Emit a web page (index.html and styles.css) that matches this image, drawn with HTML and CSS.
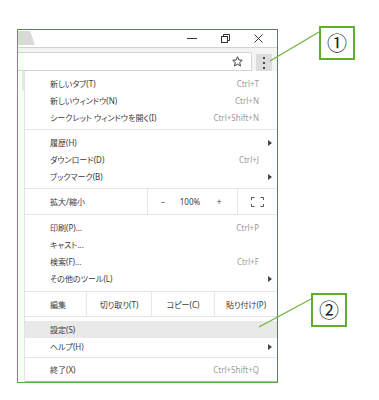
FILE: index.html
```html
<!DOCTYPE html>
<html>
    <head>
        <meta charset="utf-8">
        <meta name="viewport" content="width=device-width, initial-scale=1.0">
        <title>Chrome メニュー</title>

        <link rel="stylesheet" href="styles.css">
    </head>
    <body>
        <div class="shot">
            <div class="titlebar">
                <svg class="tab" width="18" height="14" viewBox="0 0 18 14">
                    <polygon points="0,0 12,0 17,14 0,14" fill="#d9d9d9"/>
                </svg>
                <div class="controls">
                    <div class="ctl">
                        <svg width="11" height="9" viewBox="0 0 11 9"><line x1="0" y1="4.5" x2="10" y2="4.5" stroke="#333" stroke-width="1"/></svg>
                    </div>
                    <div class="ctl">
                        <svg width="10" height="9" viewBox="0 0 10 9">
                            <rect x="0.5" y="2.5" width="6" height="6" fill="none" stroke="#333"/>
                            <polyline points="2.5,2.5 2.5,0.5 8.5,0.5 8.5,6.5 6.5,6.5" fill="none" stroke="#333"/>
                        </svg>
                    </div>
                    <div class="ctl">
                        <svg width="9" height="9" viewBox="0 0 9 9">
                            <line x1="0.5" y1="0.5" x2="8.5" y2="8.5" stroke="#333"/>
                            <line x1="8.5" y1="0.5" x2="0.5" y2="8.5" stroke="#333"/>
                        </svg>
                    </div>
                </div>
            </div>
            <div class="toolbar">
                <div class="omnibox">
                    <svg class="star" width="11" height="11" viewBox="0 0 12 12">
                        <polygon points="6,0.8 7.5,4.3 11.2,4.6 8.4,7.1 9.3,10.9 6,8.9 2.7,10.9 3.6,7.1 0.8,4.6 4.5,4.3" fill="none" stroke="#333" stroke-width="1"/>
                    </svg>
                </div>
                <div class="menu-btn">
                    <span class="dot"></span>
                    <span class="dot"></span>
                    <span class="dot"></span>
                </div>
            </div>
            <div class="below">
                <div class="page">
                    <div class="page-col"></div>
                </div>
                <div class="menu">
                    <div class="item"><span class="label">新しいタブ(T)</span><span class="key">Ctrl+T</span><span class="arrow"></span></div>
                    <div class="item"><span class="label">新しいウィンドウ(N)</span><span class="key">Ctrl+N</span><span class="arrow"></span></div>
                    <div class="item"><span class="label">シークレット ウィンドウを開く(I)</span><span class="key">Ctrl+Shift+N</span><span class="arrow"></span></div>
                    <div class="sep"></div>
                    <div class="item"><span class="label">履歴(H)</span><span class="arrow"><i class="tri"></i></span></div>
                    <div class="item"><span class="label">ダウンロード(D)</span><span class="key">Ctrl+J</span><span class="arrow"></span></div>
                    <div class="item"><span class="label">ブックマーク(B)</span><span class="arrow"><i class="tri"></i></span></div>
                    <div class="row zoom-row">
                        <span class="label">拡大/縮小</span>
                        <div class="zoom-ctl">
                            <span class="z-minus">−</span>
                            <span class="z-pct">100%</span>
                            <span class="z-plus">+</span>
                        </div>
                        <div class="fs">
                            <svg width="13" height="10" viewBox="0 0 13 10">
                                <polyline points="0.5,3 0.5,0.5 3.5,0.5" fill="none" stroke="#555"/>
                                <polyline points="9.5,0.5 12.5,0.5 12.5,3" fill="none" stroke="#555"/>
                                <polyline points="0.5,7 0.5,9.5 3.5,9.5" fill="none" stroke="#555"/>
                                <polyline points="9.5,9.5 12.5,9.5 12.5,7" fill="none" stroke="#555"/>
                            </svg>
                        </div>
                    </div>
                    <div class="item"><span class="label">印刷(P)...</span><span class="key">Ctrl+P</span><span class="arrow"></span></div>
                    <div class="item"><span class="label">キャスト...</span><span class="arrow"></span></div>
                    <div class="item"><span class="label">検索(F)...</span><span class="key">Ctrl+F</span><span class="arrow"></span></div>
                    <div class="item"><span class="label">その他のツール(L)</span><span class="arrow"><i class="tri"></i></span></div>
                    <div class="row edit-row">
                        <span class="label">編集</span>
                        <div class="cell c1">切り取り(T)</div>
                        <div class="cell c2">コピー(C)</div>
                        <div class="cell c3">貼り付け(P)</div>
                    </div>
                    <div class="item hover"><span class="label">設定(S)</span><span class="arrow"></span></div>
                    <div class="item"><span class="label">ヘルプ(H)</span><span class="arrow"><i class="tri"></i></span></div>
                    <div class="sep sep-last"></div>
                    <div class="item"><span class="label">終了(X)</span><span class="key">Ctrl+Shift+Q</span><span class="arrow"></span></div>
                </div>
            </div>
        </div>

        <!-- annotation leader lines and numbered boxes -->
        <svg class="leaders" width="379" height="400" viewBox="0 0 379 400">
            <line x1="319" y1="32" x2="270" y2="61" stroke="#6ab53c" stroke-width="1.2"/>
            <line x1="311" y1="299" x2="259" y2="327" stroke="#6ab53c" stroke-width="1.2"/>
        </svg>
        <div class="callout callout-1">①</div>
        <div class="callout callout-2">②</div>
    </body>
</html>
```

FILE: styles.css
```css
:root {
    --green: #5fae2e;
    --text: #3a3a3a;
    --muted: #9a9a9a;
    --line: #e6e6e6;
}

body {
    margin: 0;
    background-color: #fff;
    font-family: "Noto Sans", "Noto Sans CJK JP", sans-serif;
    font-feature-settings: "palt";
    color: var(--text);
    width: 379px;
    height: 400px;
    overflow: hidden;
    position: relative;
}

.shot {
    margin: 29px 0 0 17px;
    width: 261px;
    height: 354px;
    box-sizing: border-box;
    border: 1px solid #5d7d5d;
    border-left-color: #56a848;
    border-bottom-color: #56a848;
    display: flex;
    flex-direction: column;
    background-color: #fff;
}

.titlebar {
    height: 17px;
    display: flex;
    justify-content: space-between;
    align-items: flex-start;
}

.tab {
    display: block;
    margin-top: 1px;
}

.controls {
    display: flex;
    padding-right: 2px;
}

.ctl {
    width: 33px;
    height: 15px;
    display: flex;
    align-items: center;
    justify-content: center;
    padding-top: 1px;
}

.ctl svg {
    display: block;
}

.toolbar {
    height: 23px;
    border-top: 1px solid #d2d2d2;
    background-color: #f4f4f4;
    display: flex;
    align-items: flex-end;
}

.omnibox {
    width: 234px;
    height: 19px;
    box-sizing: border-box;
    background-color: #fff;
    border: 1px solid #d4d4d4;
    border-left: none;
    border-radius: 0 2px 0 0;
    display: flex;
    align-items: center;
    justify-content: flex-end;
    padding-right: 8px;
}

.star {
    display: block;
}

.menu-btn {
    width: 16px;
    height: 17px;
    margin: 0 0 0 4px;
    background-color: #dcdcdc;
    border-radius: 1px;
    display: flex;
    flex-direction: column;
    align-items: center;
    justify-content: center;
    gap: 3px;
}

.dot {
    width: 2px;
    height: 2px;
    background-color: #444;
}

.below {
    flex: 1;
    display: flex;
    min-height: 0;
    overflow: hidden;
}

.page {
    width: 6px;
    padding-left: 1px;
}

.page-col {
    width: 3px;
    height: 20px;
    margin: 0 0 0 3px;
    background-color: #e8e8e8;
}

.menu {
    flex: 1;
    background-color: #fff;
    box-shadow: -1px 0 0 #e2e2e2;
    border-bottom: 1px solid #b9b9b9;
    padding: 4px 0 2px;
    font-size: 8px;
}

.item {
    height: 17px;
    display: flex;
    align-items: center;
    padding-left: 25px;
}

.item.hover {
    background-color: #e9e9e9;
}

.label {
    flex: 1;
    white-space: nowrap;
}

.key {
    color: var(--muted);
    white-space: nowrap;
}

.arrow {
    width: 18px;
    display: flex;
    justify-content: flex-end;
    padding-right: 5px;
    box-sizing: border-box;
}

.tri {
    width: 0;
    height: 0;
    border-top: 3px solid transparent;
    border-bottom: 3px solid transparent;
    border-left: 4px solid #444;
}

.sep {
    height: 1px;
    background-color: var(--line);
    margin: 3px 0 4px;
}

.sep-last {
    margin: 2px 0 3px;
}

.row {
    display: flex;
    align-items: stretch;
    border-top: 1px solid var(--line);
    border-bottom: 1px solid var(--line);
}

.row .label {
    padding-left: 25px;
    display: flex;
    align-items: center;
}

.zoom-row {
    height: 25px;
    margin: 3px 0 4px;
}

.zoom-ctl {
    width: 89px;
    border-left: 1px solid var(--line);
    display: flex;
    align-items: center;
}

.zoom-ctl span {
    text-align: center;
}

.z-minus {
    width: 30px;
}

.z-pct {
    width: 24px;
}

.z-plus {
    width: 34px;
}

.fs {
    width: 39px;
    border-left: 1px solid var(--line);
    display: flex;
    align-items: center;
    justify-content: center;
}

.fs svg {
    display: block;
}

.edit-row {
    height: 24px;
    margin: 4px 0;
}

.cell {
    border-left: 1px solid var(--line);
    display: flex;
    align-items: center;
    justify-content: center;
    white-space: nowrap;
}

.c1 {
    width: 64px;
}

.c2 {
    width: 62px;
}

.c3 {
    width: 62px;
}

.leaders {
    position: absolute;
    left: 0;
    top: 0;
    pointer-events: none;
}

.callout {
    position: absolute;
    width: 36px;
    height: 34px;
    box-sizing: border-box;
    border: 2px solid var(--green);
    background-color: #fff;
    display: flex;
    align-items: center;
    justify-content: center;
    font-family: "Noto Sans CJK JP", sans-serif;
    font-size: 20px;
    line-height: 1;
    color: #222;
}

.callout-1 {
    left: 319px;
    top: 26px;
}

.callout-2 {
    left: 311px;
    top: 293px;
}
```
